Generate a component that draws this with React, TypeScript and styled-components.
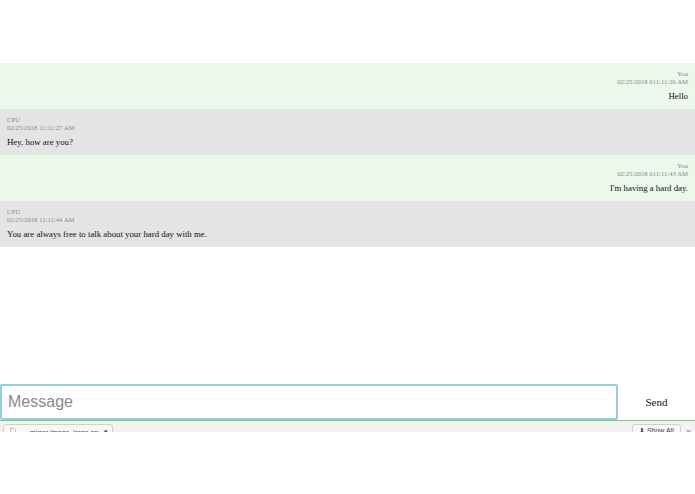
import styled, { createGlobalStyle } from 'styled-components';

const GlobalStyle = createGlobalStyle`
    html, body {
        margin: 0;
        padding: 0;
        background: #ffffff;
    }
`

const Pagina = styled.div`
    height: 494px;
    display: flex;
    flex-direction: column;
    font-family: "Liberation Serif", "Times New Roman", serif;
`
const Topo = styled.div`
    height: 63px;
    flex-shrink: 0;
`
const Conversa = styled.div`
    flex: 1;
    display: flex;
    flex-direction: column;
`
const Mensagem = styled.div<{ $minha: boolean }>`
    padding: 7px 7px 6px 7px;
    background-color: ${p => (p.$minha ? '#ebf8eb' : '#e4e4e4')};
    text-align: ${p => (p.$minha ? 'right' : 'left')};
`
const Meta = styled.div`
    font-size: 6.7px;
    line-height: 8px;
    color: #8a8a8a;
`
const Texto = styled.div`
    margin-top: 3px;
    font-size: 8.8px;
    line-height: 14px;
    color: #111;
`
const Compositor = styled.form`
    display: flex;
    height: 36px;
    flex-shrink: 0;
    border-bottom: 1px solid #74cc6a;
`
const Campo = styled.input`
    flex: 1;
    min-width: 0;
    box-sizing: border-box;
    height: 36px;
    margin: 0;
    padding: 0 6px;
    border: 2px solid #93cde6;
    border-radius: 2px;
    font-family: "Liberation Sans", Arial, sans-serif;
    font-size: 16px;
    color: #333;
    outline: none;
    &::placeholder {
        color: #8a8a8a;
    }
`
const Enviar = styled.button`
    width: 77px;
    flex-shrink: 0;
    border: none;
    background: #ffffff;
    font-family: "Liberation Serif", "Times New Roman", serif;
    font-size: 11px;
    color: #111;
    padding: 0;
`
const Prateleira = styled.div`
    height: 11px;
    flex-shrink: 0;
    overflow: hidden;
    background: #f2f2f2;
    display: flex;
    align-items: flex-start;
    justify-content: space-between;
    padding: 3px 0 0 3px;
    box-sizing: border-box;
`
const Arquivo = styled.div`
    width: 110px;
    height: 16px;
    box-sizing: border-box;
    border: 1px solid #cfcfcf;
    border-radius: 3px;
    background: #f7f7f7;
    display: flex;
    align-items: center;
    gap: 6px;
    padding: 0 4px 0 6px;
    font-family: "Liberation Sans", Arial, sans-serif;
    font-size: 7px;
    color: #444;
`
const NomeArquivo = styled.span`
    flex: 1;
    white-space: nowrap;
    overflow: hidden;
    padding-left: 8px;
`
const Direita = styled.div`
    display: flex;
    align-items: flex-start;
    gap: 5px;
    padding-right: 4px;
`
const BotaoTodos = styled.div`
    height: 16px;
    box-sizing: border-box;
    border: 1px solid #cfcfcf;
    border-radius: 3px;
    background: #f7f7f7;
    padding: 2px 6px;
    font-family: "Liberation Sans", Arial, sans-serif;
    font-size: 7px;
    color: #444;
`
const Fechar = styled.span`
    font-family: "Liberation Sans", Arial, sans-serif;
    font-size: 9px;
    color: #777;
    line-height: 16px;
`
const Resto = styled.div`
    height: 62px;
    flex-shrink: 0;
`

const mensagens = [
    { autor: 'You', data: '02/25/2018 011:11:26 AM', texto: 'Hello' },
    { autor: 'CPU', data: '02/25/2018 11:11:27 AM', texto: 'Hey, how are you?' },
    { autor: 'You', data: '02/25/2018 011:11:43 AM', texto: "I'm having a hard day." },
    { autor: 'CPU', data: '02/25/2018 11:11:44 AM', texto: 'You are always free to talk about your hard day with me.' },
]

function App() {
    return (
        <Pagina>
            <GlobalStyle />
            <Topo />
            <Conversa>
                {mensagens.map((m, i) => (
                    <Mensagem key={i} $minha={m.autor === 'You'}>
                        <Meta>{m.autor}</Meta>
                        <Meta>{m.data}</Meta>
                        <Texto>{m.texto}</Texto>
                    </Mensagem>
                ))}
            </Conversa>
            <Compositor onSubmit={e => e.preventDefault()}>
                <Campo placeholder="Message" />
                <Enviar type="submit">Send</Enviar>
            </Compositor>
            <Prateleira>
                <Arquivo>
                    <svg width="6" height="8" viewBox="0 0 7 9">
                        <path d="M0.5 0.5h4l2 2v6h-6z" fill="#fff" stroke="#999" strokeWidth="0.8" />
                    </svg>
                    <NomeArquivo>mirror image_large.png</NomeArquivo>
                    <span>▾</span>
                </Arquivo>
                <Direita>
                    <BotaoTodos>⬇ Show All</BotaoTodos>
                    <Fechar>×</Fechar>
                </Direita>
            </Prateleira>
            <Resto />
        </Pagina>
    )
}

export default App;
